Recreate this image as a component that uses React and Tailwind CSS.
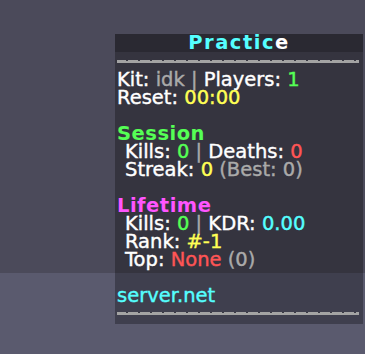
import React from "react";

const C = {
  w: "text-[#ffffff]",
  g: "text-[#aaaaaa]",
  gr: "text-[#55ff55]",
  y: "text-[#ffff55]",
  r: "text-[#ff5555]",
  a: "text-[#55ffff]",
  p: "text-[#ff55ff]",
};

function Divider() {
  const segs = Array.from({ length: 20 });
  return (
    <div className="flex w-[242px] h-[3px] overflow-hidden">
      <div className="flex flex-col w-[9px] shrink-0">
        <div className="h-px bg-[#a3a3a3]" />
        <div className="h-[2px] bg-[#a3a3a3]" />
      </div>
      {segs.map((_, i) => (
        <div key={i} className="flex flex-col w-[12px] shrink-0">
          <div className="flex h-px">
            <div className="w-[2px] bg-[#3a3a44]" />
            <div className="w-[10px] bg-[#a3a3a3]" />
          </div>
          <div className="h-[2px] bg-[#a3a3a3]" />
        </div>
      ))}
    </div>
  );
}

function S({ c, children }) {
  return <span className={`inline-block h-[18px] leading-[18px] align-top whitespace-pre ${c}`}>{children}</span>;
}

function Line({ children, indent, bold }) {
  return (
    <div
      className={`flex h-[18px] leading-[18px] whitespace-nowrap ${indent ? "pl-[8px]" : ""} ${
        bold ? "font-bold tracking-[0.5px]" : "[-webkit-text-stroke:0.4px_currentColor]"
      }`}
    >
      {children}
    </div>
  );
}

export default function App() {
  return (
    <div
      className="w-[365px] h-[354px] overflow-hidden pt-[34px] pl-[115px] bg-[linear-gradient(to_bottom,#4b4a5a_273px,#5a5a6e_273px)] text-[19.5px]"
      style={{ fontFamily: '"DejaVu Sans", sans-serif' }}
    >
      <div className="w-[248px] bg-[rgba(0,0,0,0.29)]">
        <div className="flex justify-center h-[18px] leading-[18px] bg-[rgba(0,0,0,0.2)] font-bold tracking-[1.5px]">
          <S c={C.a}>Practic</S>
          <S c={C.w}>e</S>
        </div>
        <div className="h-[19px] pt-[8px] pl-[2px]">
          <Divider />
        </div>
        <div className="pl-[2px] text-[#ffffff]">
          <Line>
            <S c={C.w}>Kit: </S>
            <S c={C.g}>idk | </S>
            <S c={C.w}>Players: </S>
            <S c={C.gr}>1</S>
          </Line>
          <Line>
            <S c={C.w}>Reset: </S>
            <S c={C.y}>00:00</S>
          </Line>
          <Line />
          <Line bold>
            <S c={C.gr}>Session</S>
          </Line>
          <Line indent>
            <S c={C.w}>Kills: </S>
            <S c={C.gr}>0 </S>
            <S c={C.g}>| </S>
            <S c={C.w}>Deaths: </S>
            <S c={C.r}>0</S>
          </Line>
          <Line indent>
            <S c={C.w}>Streak: </S>
            <S c={C.y}>0 </S>
            <S c={C.g}>(Best: 0)</S>
          </Line>
          <Line />
          <Line bold>
            <S c={C.p}>Lifetime</S>
          </Line>
          <Line indent>
            <S c={C.w}>Kills: </S>
            <S c={C.gr}>0 </S>
            <S c={C.g}>| </S>
            <S c={C.w}>KDR: </S>
            <S c={C.a}>0.00</S>
          </Line>
          <Line indent>
            <S c={C.w}>Rank: </S>
            <S c={C.y}>#-1</S>
          </Line>
          <Line indent>
            <S c={C.w}>Top: </S>
            <S c={C.r}>None </S>
            <S c={C.g}>(0)</S>
          </Line>
          <Line />
          <Line>
            <S c={C.a}>server.net</S>
          </Line>
        </div>
        <div className="pt-[7px] pb-[9px] pl-[2px]">
          <Divider />
        </div>
      </div>
    </div>
  );
}
